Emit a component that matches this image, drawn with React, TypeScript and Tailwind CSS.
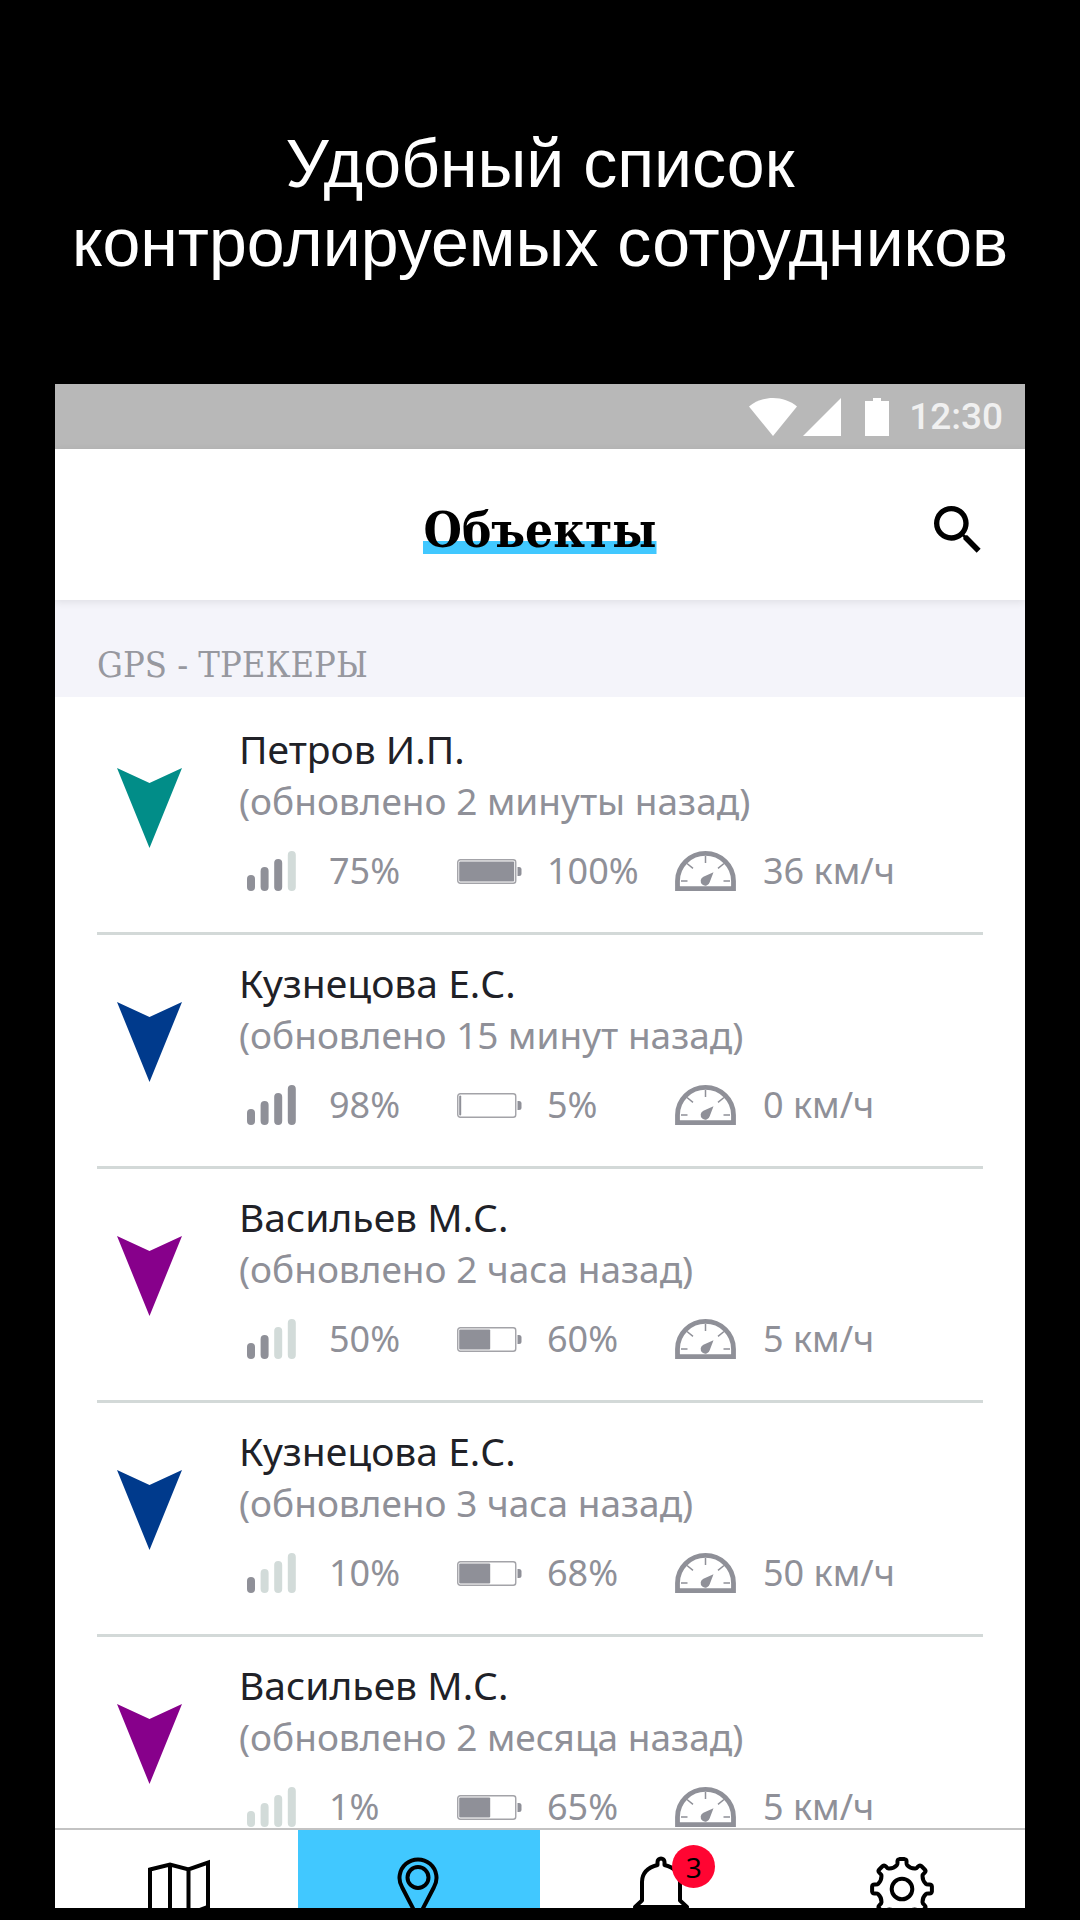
import type { ReactNode } from "react";

type Tracker = {
  id: number;
  name: string;
  updated: string;
  arrow: string;
  signal: number;
  bars: number;
  battery: number;
  charge: number;
  speed: number;
};

const trackers: Tracker[] = [
  { id: 1, name: "Петров И.П.", updated: "2 минуты", arrow: "#018d88", signal: 75, bars: 3, battery: 100, charge: 55, speed: 36 },
  { id: 2, name: "Кузнецова Е.С.", updated: "15 минут", arrow: "#003a8c", signal: 98, bars: 4, battery: 5, charge: 2, speed: 0 },
  { id: 3, name: "Васильев М.С.", updated: "2 часа", arrow: "#87008b", signal: 50, bars: 2, battery: 60, charge: 31, speed: 5 },
  { id: 4, name: "Кузнецова Е.С.", updated: "3 часа", arrow: "#003a8c", signal: 10, bars: 1, battery: 68, charge: 31, speed: 50 },
  { id: 5, name: "Васильев М.С.", updated: "2 месяца", arrow: "#87008b", signal: 1, bars: 0, battery: 65, charge: 31, speed: 5 },
];

function SignalIcon({ bars }: { bars: number }) {
  return (
    <svg width="49" height="40" viewBox="0 0 49 40" className="ml-2" aria-hidden="true">
      {[16, 24, 32, 40].map((h, i) => (
        <rect key={h} x={i * 13.6} y={40 - h} width="8" height={h} rx="4" fill={i < bars ? "#8f9098" : "#d2dbd9"} />
      ))}
    </svg>
  );
}

function BatteryIcon({ charge }: { charge: number }) {
  return (
    <svg width="65" height="25" viewBox="0 0 65 25" aria-hidden="true">
      <rect x="0.75" y="0.75" width="58" height="23.5" rx="2.5" fill="none" stroke="#a3a3a8" strokeWidth="1.4" />
      <rect x="2.2" y="2.6" width={charge} height="19.8" rx="1" fill="#8f9098" />
      <path d="M60.5 8h1.5a2.5 2.5 0 0 1 2.5 2.5v4a2.5 2.5 0 0 1-2.5 2.5h-1.5z" fill="#8f9098" />
    </svg>
  );
}

function GaugeIcon() {
  return (
    <svg width="61" height="40" viewBox="0 0 61 40" fill="none" stroke="#8f9098" aria-hidden="true">
      <path d="M2.5 37.6V30a28 27.6 0 0 1 56 0v7.6z" strokeWidth="4.8" />
      <path d="M30.5 5v7M12 12.5l6 4.8M49 12.5l-6 4.8M6 30h6.5M55 30h-6.5" strokeWidth="1.5" />
      <path d="M38.5 21.2l-3.8 10a4.6 4.6 0 1 1-6.3-5.4z" fill="#8f9098" stroke="none" />
    </svg>
  );
}

function ArrowIcon({ color }: { color: string }) {
  return (
    <svg width="65" height="80" viewBox="0 0 65 80" aria-hidden="true">
      <path d="M0 0l32.5 15L65 0 32.5 80z" fill={color} />
    </svg>
  );
}

function gearPath(): string {
  const at = (deg: number, r: number) => {
    const a = ((deg - 90) * Math.PI) / 180;
    return `${(30 + r * Math.cos(a)).toFixed(2)} ${(32 + r * Math.sin(a)).toFixed(2)}`;
  };
  let d = `M${at(-12, 24.5)}`;
  for (let k = 0; k < 8; k++) {
    const c = k * 45;
    d += `Q${at(c - 10, 25)} ${at(c - 9.5, 27.5)}Q${at(c - 9, 30)} ${at(c - 5, 30)}L${at(c + 5, 30)}`;
    d += `Q${at(c + 9, 30)} ${at(c + 9.5, 27.5)}Q${at(c + 10, 25)} ${at(c + 12, 24.5)}Q${at(c + 22.5, 22)} ${at(c + 33, 24.5)}`;
  }
  return d + "Z";
}

function NavIcon({ children }: { children: ReactNode }) {
  return (
    <svg width="64" height="64" viewBox="0 0 64 64" className="overflow-visible" fill="none" stroke="#000" strokeWidth="4" strokeLinejoin="round" aria-hidden="true">
      {children}
    </svg>
  );
}

function Tab({ label, active, children }: { label: string; active?: boolean; children: ReactNode }) {
  return (
    <button
      type="button"
      aria-label={label}
      aria-current={active ? "page" : undefined}
      className={`flex flex-1 items-start justify-center pt-[27px] ${active ? "bg-[#41c8ff]" : "bg-white"}`}
    >
      <span className="relative">{children}</span>
    </button>
  );
}

function Row({ t }: { t: Tracker }) {
  return (
    <li className="flex items-start border-b-[3px] border-[#d3d9d8] pt-[22px] pb-[41px]">
      <div className="mt-[45px] w-[142px] shrink-0 pl-5">
        <ArrowIcon color={t.arrow} />
      </div>
      <div className="min-w-0 flex-1">
        <h3 className="text-[39px] leading-[52px] text-[#202127]">{t.name}</h3>
        <p className="text-[37px] leading-[52px]">(обновлено {t.updated} назад)</p>
        <div className="mt-6 grid grid-cols-[90px_128px_90px_128px_88px_1fr] items-center text-[36px] leading-[40px] whitespace-nowrap">
          <SignalIcon bars={t.bars} />
          <span>{t.signal}%</span>
          <BatteryIcon charge={t.charge} />
          <span>{t.battery}%</span>
          <GaugeIcon />
          <span>{t.speed} км/ч</span>
        </div>
      </div>
    </li>
  );
}

export default function App() {
  return (
    <div className="flex h-screen flex-col overflow-hidden bg-black px-[55px] pb-3 font-['Noto_Sans',sans-serif]">
      <h1 className="shrink-0 pt-[124px] pb-[102px] text-center font-['Liberation_Sans',sans-serif] text-[68px] leading-[79px] text-white">
        Удобный список
        <br />
        <span className="whitespace-nowrap">контролируемых сотрудников</span>
      </h1>

      <main className="flex min-h-0 flex-1 flex-col bg-white">
        <div className="flex h-[65px] shrink-0 items-center justify-end bg-[#b8b8b8] pr-[22px] text-white">
          <svg width="48" height="38" viewBox="0 0 48 38" fill="currentColor" aria-hidden="true">
            <path d="M0 8.5C6.500 3 15 0 24 0s17.500 3 24 8.500L24 38z" />
          </svg>
          <svg width="38" height="38" viewBox="0 0 38 38" className="ml-1.5" fill="currentColor" aria-hidden="true">
            <path d="M38 0v38H0z" />
          </svg>
          <svg width="24" height="38" viewBox="0 0 24 38" className="ml-6" fill="currentColor" aria-hidden="true">
            <path d="M8 0h8v3h8v35H0V3h8z" />
          </svg>
          <time className="ml-5 font-['Roboto',sans-serif] text-[37px] leading-none font-medium text-[#f0f0f0]">12:30</time>
        </div>

        <header className="relative z-10 grid h-[151px] shrink-0 grid-cols-[1fr_auto_1fr] items-center bg-white pt-[10px] pr-[35px] pl-[35px] shadow-[0_2px_8px_rgba(0,0,0,0.09)]">
          <h2 className="col-start-2 bg-[linear-gradient(#41c8ff,#41c8ff)] bg-[length:100%_13px] bg-bottom bg-no-repeat font-['DejaVu_Serif_Condensed','DejaVu_Serif',serif] text-[49px] leading-[48px] font-bold text-black">
            Объекты
          </h2>
          <button type="button" aria-label="Поиск" className="justify-self-end">
            <svg width="64" height="64" viewBox="0 0 24 24" fill="#000" aria-hidden="true">
              <path d="M15.5 14h-.79l-.28-.27A6.471 6.471 0 0 0 16 9.500 6.500 6.500 0 1 0 9.500 16c1.610 0 3.090-.59 4.230-1.570l.27.28v.79l5 4.990L20.490 19l-4.990-5zm-6 0C7.010 14 5 11.990 5 9.500S7.010 5 9.500 5 14 7.010 14 9.500 11.990 14 9.500 14z" />
            </svg>
          </button>
        </header>

        <h2 className="shrink-0 bg-[#f4f4fa] px-[42px] pt-[45px] pb-3 font-['DejaVu_Serif_Condensed','DejaVu_Serif',serif] text-[36px] leading-[40px] text-[#97989f]">
          GPS - ТРЕКЕРЫ
        </h2>

        <ul className="min-h-0 flex-1 overflow-hidden px-[42px] pt-1 text-[#8f9098]">
          {trackers.map((t) => (
            <Row key={t.id} t={t} />
          ))}
        </ul>

        <nav className="flex h-20 shrink-0 overflow-hidden border-t-2 border-[#c3c3c3]">
          <Tab label="Карта">
            <NavIcon>
              <path d="M6 12.500L26 7.500l18.500 5L64 5.500V50l-19.500 7L26 53 6 57zM26 7.500V53M44.500 12.500V57" strokeLinejoin="miter" />
            </NavIcon>
          </Tab>
          <Tab label="Объекты" active>
            <NavIcon>
              <path d="M31 61L15.200 30.500a18.500 18.500 0 1 1 31.600 0z" />
              <circle cx="31" cy="20.500" r="10.500" />
            </NavIcon>
          </Tab>
          <Tab label="Уведомления: 3">
            <NavIcon>
              <path d="M28.500 8V5a3.500 3.500 0 0 1 7 0v3C45 10.500 51 16 51 25v18.500l7 6.500H6l7-6.500V25C13 16 19 10.500 28.500 8z" />
            </NavIcon>
            <span className="absolute -top-3 left-[43px] flex size-[43px] items-center justify-center rounded-full bg-[#ff0532] text-[28px] leading-none text-black">3</span>
          </Tab>
          <Tab label="Настройки">
            <NavIcon>
              <path d={gearPath()} />
              <circle cx="30" cy="32" r="10.300" />
            </NavIcon>
          </Tab>
        </nav>
      </main>
    </div>
  );
}
